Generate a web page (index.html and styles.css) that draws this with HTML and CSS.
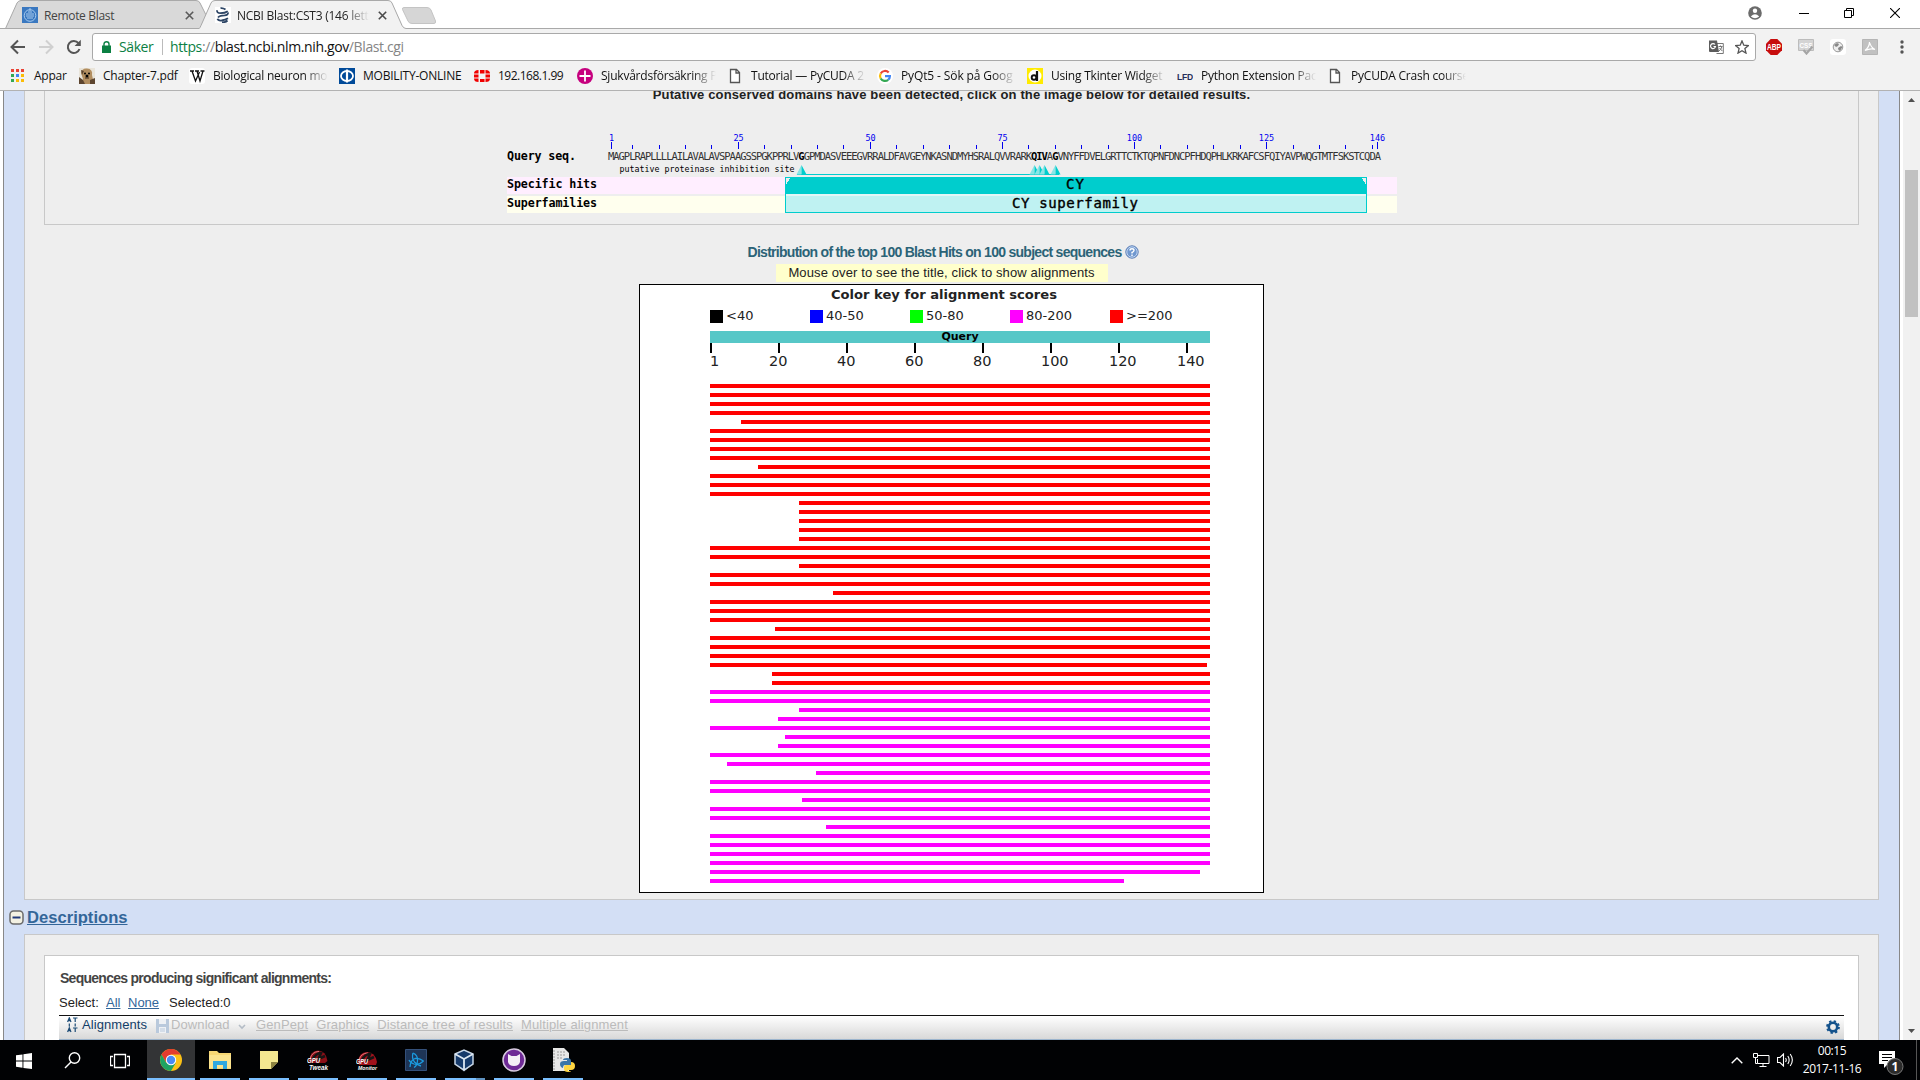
FILE: index.html
```html
<!DOCTYPE html>
<html lang="sv">
<head>
<meta charset="utf-8">
<title>NCBI Blast:CST3 (146 letters)</title>
<link rel="stylesheet" href="styles.css">
</head>
<body>
<header class="tabstrip">
  <svg class="tab-shapes" width="460" height="29" viewBox="0 0 460 29">
    <path d="M0 28.5H5.500L17 3Q18.500.5 21 .5H196Q199 .5 200 3L206 15L200 28.500Z" fill="#d9d9d9" stroke="#a9a9a9"/>
    <path d="M199 29.500L211 3Q212 .5 215 .5H388Q391 .5 392 3L403 26Q404 28.500 407 28.500V30H199Z" fill="#f2f2f2"/>
    <path d="M199 28.500Q200 28 201 25.500L211 3Q212 .5 215 .5H388Q391 .5 392 3L402 25.500Q403.500 28.500 406 28.500H460" fill="none" stroke="#a9a9a9"/>
    <path d="M404 7.500H427Q430 7.500 431 10L435.500 21Q436 23.500 434 23.500H412Q409 23.500 408 21L402.500 9.500Q402 7.500 404 7.500Z" fill="#d6d6d6" stroke="#c4c4c4"/>
  </svg>
  <div class="tab tab-back">
    <svg width="16" height="16" viewBox="0 0 16 16"><path fill="#3a78c0" d="M0 0h16v16H0z"/><circle cx="8" cy="8.500" r="5.800" fill="none" stroke="#a8cbee"/><path d="M4 7h8M4 9h8M5 11h6M6 5h4M8 1v3" stroke="#a8cbee"/></svg>
    <span class="tab-title">Remote Blast</span>
    <svg class="tab-close" width="9" height="9" viewBox="0 0 9 9"><path d="M.8.8l7.400 7.400M8.200.8L.8 8.200" stroke="#5a5a5a" stroke-width="1.600"/></svg>
  </div>
  <div class="tab tab-front">
    <svg width="16" height="16" viewBox="0 0 16 16"><path fill="#fff" d="M0 0h16v16H0z"/><g fill="none" stroke="#2d4565" stroke-width="1.800"><path d="M5.500 1.200Q8 .8 10.500 2.500M2.200 3.200Q1.500 6 5.500 6.200Q10 6.200 12.800 4.200"/><path d="M13 5.500Q13.500 8 9.500 8.300Q4.500 8.500 3 10.500"/><path d="M2.500 11.800Q3 13.800 6.500 13.500Q10.500 13 13 11.200M7 15.300Q10.500 15.500 12.500 13.500"/></g></svg>
    <span class="tab-title fade">NCBI Blast:CST3 (146 lett</span>
    <svg class="tab-close" width="9" height="9" viewBox="0 0 9 9"><path d="M.8.8l7.400 7.400M8.200.8L.8 8.200" stroke="#4a4a4a" stroke-width="1.600"/></svg>
  </div>
  <div class="window-buttons">
    <svg width="14" height="14" viewBox="0 0 14 14"><circle cx="7" cy="7" r="6.800" fill="#6b6b6b"/><circle cx="7" cy="4.800" r="2.200" fill="#fff"/><path d="M2.800 10.500Q7 6 11.200 10.500Q7 14 2.800 10.500Z" fill="#fff"/></svg>
    <svg width="10" height="10" viewBox="0 0 10 10"><path d="M0 5.500h10" stroke="#000"/></svg>
    <svg width="10" height="10" viewBox="0 0 10 10"><path d="M.5 2.500h7v7h-7zM2.500 2.500v-2h7v7h-2" fill="none" stroke="#000"/></svg>
    <svg width="10" height="10" viewBox="0 0 10 10"><path d="M0 0l10 10M10 0L0 10" stroke="#000" stroke-width="1.100"/></svg>
  </div>
</header>

<div class="toolbar">
  <svg class="nav" width="16" height="16" viewBox="0 0 16 16"><path d="M15 8H2M8 1.500L1.500 8L8 14.500" fill="none" stroke="#555" stroke-width="2"/></svg>
  <svg class="nav" width="16" height="16" viewBox="0 0 16 16"><path d="M1 8h13M8 1.500L14.500 8L8 14.500" fill="none" stroke="#d0d0d0" stroke-width="2"/></svg>
  <svg class="nav" width="16" height="16" viewBox="0 0 16 16"><path d="M13.500 10A6 6 0 1 1 12.500 4.200" fill="none" stroke="#555" stroke-width="2"/><path d="M14.800.8V7H8.600Z" fill="#555"/></svg>
  <div class="omnibox">
    <svg class="lock" width="9" height="12" viewBox="0 0 9 12"><path d="M0 4.500h9V12H0z" fill="#0b8043"/><path d="M2 5V3a2.500 2.300 0 0 1 5 0v2" fill="none" stroke="#0b8043" stroke-width="1.400"/></svg>
    <span class="secure">Säker</span>
    <span class="url"><span class="green">https</span><span class="grey">://</span>blast.ncbi.nlm.nih.gov<span class="grey">/Blast.cgi</span></span>
    <svg class="translate" width="15" height="14" viewBox="0 0 15 14"><path d="M7.500 3.500h6.800v10H7.500" fill="#fff" stroke="#777"/><path d="M0 .5h8L10 12H1Q0 12 0 11Z" fill="#5c5c5c"/><path d="M6 4.500A2.500 2.500 0 1 0 6.500 6.500H4.500" fill="none" stroke="#fff" stroke-width="1.200"/><path d="M9.500 6.500h4M11.500 5.500v1M13 6.500Q12 10 9.800 11M10.500 8l2.800 3" fill="none" stroke="#777"/></svg>
    <svg width="14" height="14" viewBox="0 0 14 14"><path d="M7 .9l1.800 4.300 4.600.4-3.500 3 1.100 4.500L7 10.700l-4 2.400 1.100-4.500-3.500-3 4.600-.4z" fill="none" stroke="#555" stroke-width="1.300"/></svg>
  </div>
  <div class="extensions">
    <svg width="16" height="16" viewBox="0 0 16 16"><path d="M4.700 0h6.600L16 4.700v6.600L11.300 16H4.700L0 11.300V4.700Z" fill="#c70d0d"/><text class="ext-text" x="1" y="11" font-size="8.500" textLength="14" lengthAdjust="spacingAndGlyphs" fill="#fff">ABP</text></svg>
    <svg width="16" height="16" viewBox="0 0 16 16"><path d="M.5.5h15v11H.5z" fill="#d4d4d4" stroke="#bcbcbc"/><text class="ext-text" x="1.500" y="9" font-size="8" textLength="13" lengthAdjust="spacingAndGlyphs" fill="#fff">CSS</text><path d="M5.500 11l3 3.500 6-7" fill="none" stroke="#a5a5a5" stroke-width="2.200"/></svg>
    <svg width="16" height="16" viewBox="0 0 16 16"><rect width="16" height="16" rx="3" fill="#fff"/><circle cx="8" cy="8" r="4.800" fill="#eee" stroke="#999"/><path d="M4 6l3-2 2 1-1 2-2 1zM8 9l3-2 1.500 1L10 12 8.500 11z" fill="#888"/></svg>
    <svg width="16" height="16" viewBox="0 0 16 16"><path d="M.5.500h15v15H.5z" fill="#c1c1c1" stroke="#b5b5b5"/><path d="M7.500 3Q8.500 8 13 10.500Q9 8.800 3 11.500Q7.500 8 7.500 3" fill="none" stroke="#fff" stroke-width="1.200"/></svg>
    <svg width="4" height="14" viewBox="0 0 4 14"><circle cx="2" cy="2" r="1.700" fill="#555"/><circle cx="2" cy="7" r="1.700" fill="#555"/><circle cx="2" cy="12" r="1.700" fill="#555"/></svg>
  </div>
</div>

<nav class="bookmarks">
  <a class="bm"><svg width="16" height="16" viewBox="0 0 16 16"><path d="M1 1h3v3H1zM6 1h3v3H6zM11 1h3v3h-3z" fill="#ea4335"/><path d="M1 6h3v3H1z" fill="#34a853"/><path d="M6 6h3v3H6z" fill="#4285f4"/><path d="M11 6h3v3h-3zM6 11h3v3H6zM11 11h3v3h-3z" fill="#fbbc05"/><path d="M1 11h3v3H1z" fill="#34a853"/></svg><span>Appar</span></a>
  <a class="bm"><svg width="16" height="16" viewBox="0 0 16 16"><path d="M0 0h16v16H0z" fill="#e9e4d9"/><path d="M2 5Q3 0 8 .5Q14 1 13 7L15 16H2L4 11Z" fill="#b28e60"/><path d="M0 9l4 3 2 4H0zM11 12l5-2v6h-5zM2 2l3 1-2 4z" fill="#5d452f"/><circle cx="6" cy="5.500" r="1"/><circle cx="10" cy="5.500" r="1"/><circle cx="8" cy="8" r="1.500"/><path d="M6 10h4" stroke="#3e2818"/></svg><span>Chapter-7.pdf</span></a>
  <a class="bm"><svg width="16" height="16" viewBox="0 0 16 16"><rect width="16" height="16" rx="3" fill="#fff"/><path d="M1 3h4M6 3h4M11.500 3h4M3 3l3.500 10L10.500 4M8 3l3 10L14 3" fill="none" stroke="#111" stroke-width="1.300"/></svg><span class="fade">Biological neuron mo</span></a>
  <a class="bm"><svg width="16" height="16" viewBox="0 0 16 16"><path d="M0 0h16v16H0z" fill="#004a99"/><ellipse cx="8" cy="8" rx="6" ry="5" fill="none" stroke="#fff" stroke-width="1.800"/><path d="M8 1.500v13" stroke="#fff" stroke-width="2.200"/></svg><span>MOBILITY-ONLINE</span></a>
  <a class="bm ip"><svg width="16" height="16" viewBox="0 0 16 16"><path d="M6 2h4.500v3.500H6zM6 11h4.500v3H6zM0 6.500h4.500v3H0zM11.500 6.500H16v3h-4.500zM0 5.500Q0 2.200 4.500 2v3.500zM16 5.500Q16 2.200 11.500 2v3.500zM0 10.500Q0 14 4.500 14v-3.500zM16 10.500Q16 14 11.500 14v-3.500z" fill="#f00000"/></svg><span>192.168.1.99</span></a>
  <a class="bm"><svg width="16" height="16" viewBox="0 0 16 16"><circle cx="8" cy="8" r="8" fill="#c6007e"/><path d="M8 2.500v11M2.500 8h11" stroke="#fff" stroke-width="1.800"/></svg><span class="fade">Sjukvårdsförsäkring P</span></a>
  <a class="bm"><svg width="16" height="16" viewBox="0 0 16 16"><path d="M3.500 1.500h6l3 3v10h-9zM9 1.500V5h3.500" fill="#fff" stroke="#555" stroke-width="1.300"/></svg><span class="fade">Tutorial — PyCUDA 2</span></a>
  <a class="bm"><svg width="16" height="16" viewBox="0 0 16 16"><circle cx="8" cy="8" r="8" fill="#fff"/><g fill="none" stroke-width="2.200"><path d="M11.700 4.500A5 5 0 0 0 3.700 5.500" stroke="#ea4335"/><path d="M3.700 5.500A5 5 0 0 0 3.700 10.500" stroke="#fbbc05"/><path d="M3.700 10.500A5 5 0 0 0 11.200 11.800" stroke="#34a853"/><path d="M11.200 11.800Q12.900 10.300 12.900 8.200H8" stroke="#4285f4"/></g></svg><span class="fade wide">PyQt5 - Sök på Goog</span></a>
  <a class="bm"><svg width="16" height="16" viewBox="0 0 16 16"><path d="M0 0h16v16H0z" fill="#ffeb00"/><circle cx="8" cy="8" r="6.500" fill="#fff"/><circle cx="7" cy="9.500" r="2.300" fill="none" stroke="#111" stroke-width="1.900"/><path d="M10 3v10" stroke="#111" stroke-width="2.200"/></svg><span class="fade">Using Tkinter Widget</span></a>
  <a class="bm"><svg width="16" height="16" viewBox="0 0 16 16"><text class="ext-text" x="0" y="12" font-size="8.500" textLength="16" lengthAdjust="spacingAndGlyphs" fill="#26305a">LFD</text></svg><span class="fade">Python Extension Pac</span></a>
  <a class="bm"><svg width="16" height="16" viewBox="0 0 16 16"><path d="M3.500 1.500h6l3 3v10h-9zM9 1.500V5h3.500" fill="#fff" stroke="#555" stroke-width="1.300"/></svg><span class="fade">PyCUDA Crash course</span></a>
</nav>

<div class="viewport">
  <main class="page">
    <section class="panel summary">
      <div class="domains">
        <p class="domains-note">Putative conserved domains have been detected, click on the image below for detailed results.</p>
        <svg class="domain-map" width="890" height="84" viewBox="507 130 890 84">
          <g shape-rendering="crispEdges">
            <path d="M507 177h890v17H507z" fill="#ffeeff"/>
            <path d="M507 196h890v17H507z" fill="#ffffee"/>
            <path d="M785 177h582v17H785z" fill="#00cdcd"/>
            <path d="M785.500 194v18.500h581V194" fill="#bff2f2" stroke="#00cdcd"/>
            <path d="M786 194h580v2H786z" fill="#e3f6f6"/>
            <path d="M786 186V178h5Q787 181 786 186zM1366 186V178h-5Q1365 181 1366 186z" fill="#eee"/>
            <path d="M797 174.500h262" stroke="#00cdcd"/>
          </g>
          <g id="markers"></g>
          <g id="ruler" fill="#0000ee" stroke="none"></g>
          <g class="bitmap bold">
            <text x="507" y="159.500" font-size="11.700" textLength="69">Query seq.</text>
            <text x="507" y="187.500" font-size="11.700" textLength="90">Specific hits</text>
            <text x="507" y="206.500" font-size="11.700" textLength="90">Superfamilies</text>
          </g>
          <text class="bitmap seq" x="608" y="160" font-size="10.500" textLength="773">MAGPLRAPLLLLAILAVALAVSPAAGSSPGKPPRLV<tspan class="site">G</tspan>GPMDASVEEEGVRRALDFAVGEYNKASNDMYHSRALQVVRARK<tspan class="site">QIV</tspan>A<tspan class="site">G</tspan>VNYFFDVELGRTTCTKTQPNFDNCPFHDQPHLKRKAFCSFQIYAVPWQGTMTFSKSTCQDA</text>
          <text class="bitmap" x="619.500" y="172" font-size="8.300" textLength="175">putative proteinase inhibition site</text>
          <text class="bitmap cy" x="1066" y="189" font-size="14" textLength="18">CY</text>
          <text class="bitmap cy" x="1012" y="208" font-size="14" textLength="126">CY superfamily</text>
        </svg>
      </div>
      <h3 class="dist-title">Distribution of the top 100 Blast Hits on 100 subject sequences
        <svg width="14" height="14" viewBox="0 0 14 14"><circle cx="7" cy="7" r="6.200" fill="#6f97cf" stroke="#5b7eb5"/><circle cx="7" cy="7" r="5.200" fill="none" stroke="#c3d6f0"/><path d="M5 5.500Q5 3.800 7 3.800T9 5.500Q9 6.500 7 7.500V8.500M7 9.500V11" fill="none" stroke="#fff" stroke-width="1.400"/></svg>
      </h3>
      <p class="hint">Mouse over to see the title, click to show alignments</p>
      <div class="chart">
        <div class="key-title">Color key for alignment scores</div>
        <div class="key">
          <span><i class="k-black"></i>&lt;40</span><span><i class="k-blue"></i>40-50</span><span><i class="k-green"></i>50-80</span><span><i class="k-pink"></i>80-200</span><span><i class="k-red"></i>&gt;=200</span>
        </div>
        <div class="query-bar">Query</div>
        <div class="scale"><span class="one">1</span><span>20</span><span>40</span><span>60</span><span>80</span><span>100</span><span>120</span><span>140</span></div>
        <div class="hits" id="hits"></div>
      </div>
    </section>
    <h2 class="section-title">
      <svg width="15" height="15" viewBox="0 0 15 15"><rect x="1" y="1" width="13" height="13" rx="3.500" fill="#f3f1e2" stroke="#6b6b6b" stroke-width="1.500"/><path d="M3.500 7.500h8" stroke="#223a7a" stroke-width="2"/></svg><a>Descriptions</a>
    </h2>
    <section class="panel descriptions">
      <div class="results">
        <h3 class="results-title">Sequences producing significant alignments:</h3>
        <p class="select-row"><span class="s-label">Select:</span><a class="s-all">All</a><a class="s-none">None</a><span>Selected:0</span></p>
        <div class="actions">
          <svg class="align-icon" width="11" height="16" viewBox="0 0 11 16"><g fill="none" stroke="#1b4a75" stroke-width="1.200"><path d="M.6 5L2.300.8 4 5M1 3.700h2.600M6 1h4.500M8.200 1v4M2.300 6.500v3M8.200 6.500v3M.6 15l1.700-4.200L4 15M1 13.700h2.600M6 11h4.500M8.200 11v4"/></g></svg>
          <span class="a-align">Alignments</span>
          <svg class="save-icon" width="13" height="14" viewBox="0 0 13 14"><path d="M0 0h13v14H0z" fill="#b9c9dc"/><path d="M3 0h7v5H3zM3 8h7v6H3z" fill="#eef1f5"/><path d="M4 10h5M4 12h5" stroke="#b9c9dc"/></svg>
          <span class="a-down">Download</span>
          <svg class="caret" width="8" height="6" viewBox="0 0 8 6"><path d="M1 1l3 3 3-3" fill="none" stroke="#b4bcc6" stroke-width="1.600"/></svg>
          <a>GenPept</a><a>Graphics</a><a>Distance tree of results</a><a>Multiple alignment</a>
          <svg class="gear" width="14" height="14" viewBox="0 0 14 14"><circle cx="7" cy="7" r="4.200" fill="none" stroke="#13528c" stroke-width="2.600"/><circle cx="7" cy="7" r="5.900" fill="none" stroke="#13528c" stroke-width="2" stroke-dasharray="2.317"/></svg>
        </div>
        <div class="table-top"><i></i><i></i><i></i><i></i><i></i></div>
      </div>
    </section>
  </main>
  <div class="scrollbar">
    <svg width="7" height="4" viewBox="0 0 7 4"><path d="M0 4L3.500 0 7 4z" fill="#505050"/></svg>
    <div class="thumb"></div>
    <svg width="7" height="4" viewBox="0 0 7 4"><path d="M0 0l3.500 4L7 0z" fill="#505050"/></svg>
  </div>
</div>

<footer class="taskbar">
  <div class="task plain"><svg width="16" height="16" viewBox="0 0 16 16"><path d="M0 2.300L6.500 1.400V7.600H0zM7.400 1.200L16 0V7.600H7.400zM0 8.500H6.500V14.700L0 13.800zM7.400 8.500H16V16L7.400 14.900z" fill="#fff"/></svg></div>
  <div class="task plain"><svg width="17" height="17" viewBox="0 0 17 17"><circle cx="10.500" cy="6" r="5.200" fill="none" stroke="#fff" stroke-width="1.400"/><path d="M7 10L1 16" stroke="#fff" stroke-width="1.500"/></svg></div>
  <div class="task plain"><svg width="20" height="16" viewBox="0 0 20 16"><path d="M4.500 1.500h11v13h-11zM3 3.500H.5v9H3M17 3.500h2.500v9H17" fill="none" stroke="#fff" stroke-width="1.300"/></svg></div>
  <div class="task active"><svg width="22" height="22" viewBox="0 0 22 22"><circle cx="11" cy="11" r="11" fill="#fbc116"/><path d="M1.500 5.500A11 11 0 0 1 20.500 5.500H11L6.200 13.800Z" fill="#e33b2e"/><path d="M1.500 5.500A11 11 0 0 0 11 22L15.800 13.700H6.200Z" fill="#1da362"/><circle cx="11" cy="11" r="5.200" fill="#fff"/><circle cx="11" cy="11" r="4.200" fill="#4a8af4"/></svg></div>
  <div class="task"><svg width="22" height="20" viewBox="0 0 22 20"><path d="M0 1h8l2 2h12v16H0z" fill="#f7d774"/><path d="M0 5h22v13H0z" fill="#fbe38e"/><path d="M4 19v-8h14v8h-4v-4H8v4z" fill="#2fa8e0"/></svg></div>
  <div class="task"><svg width="18" height="18" viewBox="0 0 18 18"><path d="M0 0h18v11l-7 7H0z" fill="#f3e790"/><path d="M11 11h7l-7 7z" fill="#8d8340"/></svg></div>
  <div class="task"><svg width="22" height="22" viewBox="0 0 22 22"><path d="M2 12Q3 1.500 11 1.500T20.500 12L18 14H4Z" fill="#8a0f17"/><path d="M3 10Q5 2.500 12 2.500" fill="none" stroke="#e0767b"/><path d="M6 10Q9 4 14 4L11.500 10L18 7" fill="none" stroke="#151515" stroke-width="2.600"/><text class="gpu" x="0" y="14" font-size="7" textLength="13" lengthAdjust="spacingAndGlyphs">GPU</text><text class="gpu" x="2" y="20.500" font-size="7" textLength="19" lengthAdjust="spacingAndGlyphs">Tweak</text></svg></div>
  <div class="task"><svg width="22" height="22" viewBox="0 0 22 22"><path d="M2 13Q3 3 11 3T21 13L20 16H3Z" fill="#a0121c"/><path d="M3 11Q5 4 12 4" fill="none" stroke="#e0767b"/><path d="M6 11Q9 5 14 5L11.500 11L18 8" fill="none" stroke="#151515" stroke-width="2.600"/><text class="gpu" x="0" y="15" font-size="7" textLength="12" lengthAdjust="spacingAndGlyphs">GPU</text><text class="gpu" x="2" y="20.500" font-size="6" textLength="19" lengthAdjust="spacingAndGlyphs">Monitor</text></svg></div>
  <div class="task"><svg width="22" height="22" viewBox="0 0 22 22"><path d="M.5.500h21v21H.5z" fill="#1e3557" stroke="#34507a"/><g fill="none" stroke="#1b9be0" stroke-width="1.300"><path d="M8 4Q13 6 12.500 12Q12 17 9 18.500"/><path d="M18.500 12Q14 16.500 9 15Q5 13.500 4 11"/><path d="M5 18Q5.500 11 10 9.500Q14 8.500 18.500 12M8 4Q6.500 9 9.500 13Q12 16 16 17"/></g></svg></div>
  <div class="task vbox"><svg width="20" height="24" viewBox="0 0 20 24"><path d="M6 19l4 3.500 4-3.500" fill="#a9b7c8"/><path d="M1 5L10 1l9 4v10l-9 6-9-6z" fill="#163a6b" stroke="#c8d7e8" stroke-width="1.500"/><path d="M1 5l9 5 9-5M10 10v11" fill="none" stroke="#dce7f2" stroke-width="1.800"/></svg></div>
  <div class="task"><svg width="24" height="24" viewBox="0 0 24 24"><circle cx="12" cy="12" r="11" fill="#6e2a96" stroke="#d8cbe0" stroke-width="1.500"/><path d="M6 6l3.500 2h5L18 6v8q-1 4-6 4t-6-4z" fill="#f4f0f6"/></svg></div>
  <div class="task"><svg width="24" height="24" viewBox="0 0 24 24"><path d="M2 0h11l5 5v18H2z" fill="#e7e7e7"/><path d="M3 2v20M6 4h8M6 7h9M6 10h6" stroke="#999" stroke-dasharray="2 1"/><path d="M16 10q4 0 4 3v4h-6q-2 0-2 3-3-1-3-4t4-3h3v-1h-4q0-2 4-2" fill="#3a75a8"/><path d="M17 24q-4 0-4-3v-2q0-2 2-2h5v-3q4 0 4 4t-4 4h-3v1h3q0 1-3 1" fill="#ffd642"/></svg></div>
  <div class="tray">
    <svg class="t-up" width="12" height="7" viewBox="0 0 12 7"><path d="M.7 6.300L6 1l5.300 5.300" fill="none" stroke="#fff" stroke-width="1.400"/></svg>
    <svg class="t-net" width="17" height="14" viewBox="0 0 17 14"><path d="M5 2.500h11v8H4.500V6M10 10.500v3M6.500 13.500h7M.5.500h4v4h-4zM2.500 4.500v6h2" fill="none" stroke="#fff"/></svg>
    <svg class="t-vol" width="17" height="14" viewBox="0 0 17 14"><path d="M.5 4.500h2.500L6.500 1v12L3 9.500H.5zM8.500 5Q10 7 8.500 9M10.800 3Q13.500 7 10.800 11M13.200 1Q17.500 7 13.200 13" fill="none" stroke="#fff" stroke-width="1.100"/></svg>
    <div class="clock"><span>00:15</span><span>2017-11-16</span></div>
    <svg class="t-note" width="25" height="25" viewBox="0 0 25 25"><path d="M0 0h16v13H9l-4 4v-4H0z" fill="#fff"/><path d="M3 3.500h10M3 6.500h10M3 9.500h6" stroke="#000"/><circle cx="16" cy="15.500" r="8" fill="#2b2b2b" stroke="#777"/><text x="12.500" y="20" font-size="12" font-weight="bold" fill="#fff">1</text></svg>
    <i class="peek"></i>
  </div>
</footer>
<script src="chart.js"></script>
</body>
</html>
```
FILE: styles.css
```css
* { box-sizing: border-box; }
body { margin: 0; width: 1920px; height: 1080px; overflow: hidden; display: flex; flex-direction: column; background: #fff; font-family: "Open Sans", "Noto Sans", sans-serif; font-size: 12px; color: #222; }
p, h2, h3 { margin: 0; }
svg { display: block; flex: none; }
.fade { -webkit-mask-image: linear-gradient(to right, #000 calc(100% - 24px), transparent); mask-image: linear-gradient(to right, #000 calc(100% - 24px), transparent); }

.tabstrip { height: 29px; flex: none; display: flex; border-bottom: 1px solid #a9a9a9; position: relative; }
.tab-shapes { position: absolute; left: 0; top: 0; }
.tab { position: relative; display: flex; align-items: center; height: 29px; padding-top: 1px; }
.tab-back { width: 193px; margin-left: 22px; }
.tab-front { width: 175px; }
.tab-title { margin-left: 6px; width: 132px; white-space: nowrap; letter-spacing: -.25px; }
.tab-back .tab-title { width: 141px; color: #444; letter-spacing: -.33px; }
.tab-close { margin-left: 9px; }
.tab-back .tab-close { margin-left: 0; }
.window-buttons { display: flex; margin-left: auto; align-items: center; height: 26px; padding-right: 20px; }
.window-buttons svg:nth-child(1) { margin-right: 37px; }
.window-buttons svg:nth-child(2) { margin-right: 35px; }
.window-buttons svg:nth-child(3) { margin-right: 36px; }

.toolbar { height: 36px; flex: none; display: flex; align-items: center; background: #f2f2f2; padding-left: 10px; }
.nav { margin-right: 12px; }
.omnibox { width: 1664px; height: 28px; margin-top: -1px; border: 1px solid #a9a9a9; border-radius: 3px; background: #fff; display: flex; align-items: center; margin-left: -2px; padding: 0 6px 0 9px; font-size: 14px; }
.omnibox .secure { box-sizing: content-box; width: 34px; margin-left: 8px; padding-right: 9px; border-right: 1px solid #bbb; color: #0b8043; line-height: 16px; letter-spacing: -.4px; }
.omnibox .url { margin-left: 7px; color: #111; letter-spacing: -.38px; }
.green { color: #0b8043; }
.grey { color: #858585; }
.translate { margin-left: auto; margin-right: 11px; }
.extensions { display: flex; align-items: center; margin-left: 10px; gap: 16px; }
.extensions svg:last-child { margin-left: 6px; }
.ext-text { font-family: "Liberation Sans", sans-serif; font-weight: bold; }

.bookmarks { height: 26px; flex: none; display: grid; grid-template-columns: 69px 110px 150px 135px 103px repeat(6, 150px); padding-left: 10px; background: #f2f2f2; border-bottom: 1px solid #b2b2b2; align-items: center; }
.bm { display: flex; align-items: center; gap: 8px; white-space: nowrap; margin-top: -4px; letter-spacing: -.22px; color: #111; }
.ip { letter-spacing: -.5px; }
.bm .fade { width: 115px; }
.bm .wide { letter-spacing: -.12px; }

.viewport { flex: 1; display: flex; min-height: 0; background: #fff; }
.page { margin-left: 3px; width: 1897px; border-left: 1px solid #888; border-right: 1px solid #888; background: #d3dff5; padding: 0 20px; overflow: hidden; font-family: "Liberation Sans", Arial, sans-serif; }
.panel { background: #eee; border: 1px solid #c8c8c8; }
.summary { height: 809px; border-top: 0; padding: 0 19px; display: flex; flex-direction: column; align-items: center; }
.domains { width: 1815px; height: 134px; flex: none; border: 1px solid #c8c8c8; border-top: 0; display: flex; flex-direction: column; align-items: center; }
.domains-note { font-weight: bold; font-size: 13px; line-height: 15px; margin-top: -4px; height: 15px; letter-spacing: .14px; white-space: nowrap; }
.domain-map { margin-top: 28px; }
.bitmap { font-family: "DejaVu Sans Mono", "Liberation Mono", monospace; fill: #000; }
.bold { font-weight: bold; }
.cy { stroke: #000; stroke-width: .4px; }
.seq { fill: #333; }
.site { fill: #000; font-weight: bold; }
.num { font-family: "DejaVu Sans Mono", monospace; font-size: 8.5px; }
.dist-title { display: flex; align-items: center; gap: 4px; height: 18px; margin: 18px 16px 0 0; font-size: 14px; letter-spacing: -.72px; color: #2b6377; white-space: nowrap; }
.hint { width: 332px; height: 18px; margin: 3px 20px 0 0; line-height: 18px; background: #ffc; text-align: center; font-size: 13px; letter-spacing: .12px; white-space: nowrap; }
.chart { width: 625px; height: 609px; flex: none; margin-top: 2px; border: 1px solid #000; background: #fff; padding: 0 53px 0 70px; font-family: "DejaVu Sans", Verdana, sans-serif; color: #222; }
.key-title { font-weight: bold; font-size: 13.100px; line-height: 16px; padding-top: 2px; height: 23px; width: 468px; text-align: center; white-space: nowrap; }
.key { display: flex; height: 15px; align-items: center; font-size: 13px; margin-top: 1px; }
.key span { width: 100px; height: 13px; display: flex; align-items: flex-start; gap: 3px; line-height: 11px; }
.key i { width: 13px; height: 13px; }
.k-black { background: #000; }
.k-blue { background: #00f; }
.k-green { background: #0f0; }
.k-pink { background: #f0f; }
.k-red { background: #f00; }
.query-bar { width: 500px; height: 12px; margin-top: 7px; background: #57c7c7; text-align: center; font-weight: bold; font-size: 11px; line-height: 11px; color: #000; }
.scale { display: flex; width: 600px; height: 41px; font-size: 14.5px; letter-spacing: -.1px; }
.scale span { width: 68px; padding-top: 9px; line-height: 18px; text-indent: -9px; background: linear-gradient(#000, #000) 0 0 / 2px 10px no-repeat; }
.scale .one { text-indent: 0; }
.hits { width: 500px; display: flex; flex-direction: column; gap: 5px; }
.hits i { height: 4px; background: #f00; flex: none; }
.hits .pink { background: #f0f; }

.section-title { height: 34px; margin-left: -15px; display: flex; align-items: center; gap: 3px; font-size: 16.600px; color: #369; }
.section-title a { text-decoration: underline; padding-top: 2px; }
.descriptions { height: 200px; padding: 20px 19px 0; }
.results { height: 180px; background: #fff; border: 1px solid #c8c8c8; padding: 12px 14px 0; }
.results-title { font-size: 14px; line-height: 20px; letter-spacing: -.73px; color: #444; padding-left: 1px; }
.select-row { display: flex; font-size: 13px; height: 15px; line-height: 15px; margin-top: 7px; white-space: nowrap; }
.select-row a { color: #369; text-decoration: underline; }
.s-label { width: 47px; }
.s-all { width: 14px; margin-right: 8px; }
.s-none { margin-right: 10px; }
.actions { margin-top: 5px; height: 24px; border-top: 1px solid #111; background: linear-gradient(#fff, #d8d8d8); display: flex; align-items: flex-start; padding-left: 8px; font-size: 13px; line-height: 18px; color: #bbb; white-space: nowrap; }
.actions a { text-decoration: underline; margin-right: 8px; letter-spacing: .12px; }
.align-icon { margin-top: 1px; }
.a-align { color: #123e68; width: 66px; margin-left: 4px; letter-spacing: .08px; }
.save-icon { margin: 3px 2px 0 8px; }
.a-down { width: 60px; letter-spacing: .1px; }
.caret { margin: 8px 10px 0 7px; }
.gear { margin: 4px 4px 0 auto; }
.table-top { height: 20px; border-top: 1px solid #9ab3cc; display: flex; }
.table-top i { border-left: 1px solid #9ab3cc; width: 39px; }
.table-top i:nth-child(1) { width: 23px; }
.table-top i:nth-child(2) { width: 1567px; }
.table-top i:nth-child(3) { width: 52px; }

.scrollbar { margin-left: 3px; width: 17px; background: #f1f1f1; display: flex; flex-direction: column; align-items: center; padding: 7px 0; }
.thumb { width: 13px; height: 147px; background: #c1c1c1; margin-top: 68px; margin-bottom: auto; }

.taskbar { height: 40px; flex: none; background: #010204; display: flex; color: #fff; gap: 9px; }
.task { width: 40px; display: flex; align-items: center; justify-content: center; border-bottom: 2px solid #7abfff; padding-top: 1px; }
.plain { width: 48px; border-bottom: 0; margin-right: -9px; }
.active { width: 48px; background: #333436; margin-left: 3px; margin-right: -4px; }
.vbox { padding-right: 3px; border-bottom: 0; background: linear-gradient(to right, #7abfff 31px, #5f93c2 31px) 0 100% / 100% 2px no-repeat; }
.gpu { font-family: "Liberation Sans", sans-serif; font-weight: bold; font-style: italic; fill: #fff; }
.tray { margin-left: auto; display: flex; align-items: center; }
.t-up { margin-right: 10px; }
.t-net { margin-right: 7px; }
.clock { display: flex; flex-direction: column; align-items: center; width: 60px; margin-left: 8px; line-height: 18px; letter-spacing: -.4px; }
.t-note { margin-left: 17px; margin-top: 6px; }
.peek { width: 1px; height: 40px; background: #555; margin: 0 3px 0 12px; }
```
FILE: chart.js
```js
// Each hit is [start, end] in pixels along the 500px query bar.
const full = [0, 500];
const from = (s) => [s, 500];
const times = (n, v) => Array(n).fill(v);
const red = [
  ...times(4, full), from(31), ...times(4, full), from(48), ...times(3, full),
  ...times(5, from(89)), full, full, from(89), full, full, from(123),
  ...times(3, full), from(65), ...times(3, full), [0, 497], from(62), from(62),
];
const pink = [
  full, full, from(89), from(68), full, from(75), from(68), full, from(17), from(106),
  full, full, from(92), full, full, from(116), ...times(4, full), [0, 490], [0, 414],
];
const hits = document.getElementById("hits");
const addHit = ([start, end], cls) => {
  const bar = document.createElement("i");
  bar.className = cls;
  bar.style.marginLeft = start + "px";
  bar.style.width = end - start + "px";
  hits.append(bar);
};
red.forEach((h) => addHit(h, "red"));
pink.forEach((h) => addHit(h, "pink"));

// Residue ruler above the query sequence.
const at = (n) => Math.round(611 + (n - 1) * 5.283);
let ruler = "";
for (const n of [1, ...Array.from({ length: 29 }, (_, i) => (i + 1) * 5), 146]) {
  const major = n === 1 || n === 146 || n % 25 === 0;
  ruler += `<rect x="${at(n)}" y="${major ? 142 : 145}" width="1" height="${major ? 7 : 4}"/>`;
  if (major) ruler += `<text class="num" x="${at(n) + 0.5}" y="141" text-anchor="middle">${n}</text>`;
}
document.getElementById("ruler").innerHTML = ruler;

// Active-site markers.
document.getElementById("markers").innerHTML = [37, 81, 82, 83, 85]
  .map((n) => {
    const x = at(n) + 0.5;
    return `<path d="M${x} 165L${x - 5} 174.500H${x}z" fill="#8ae6e6"/><path d="M${x} 165L${x + 5} 174.500H${x}z" fill="#00cdcd"/>`;
  })
  .join("");
```
